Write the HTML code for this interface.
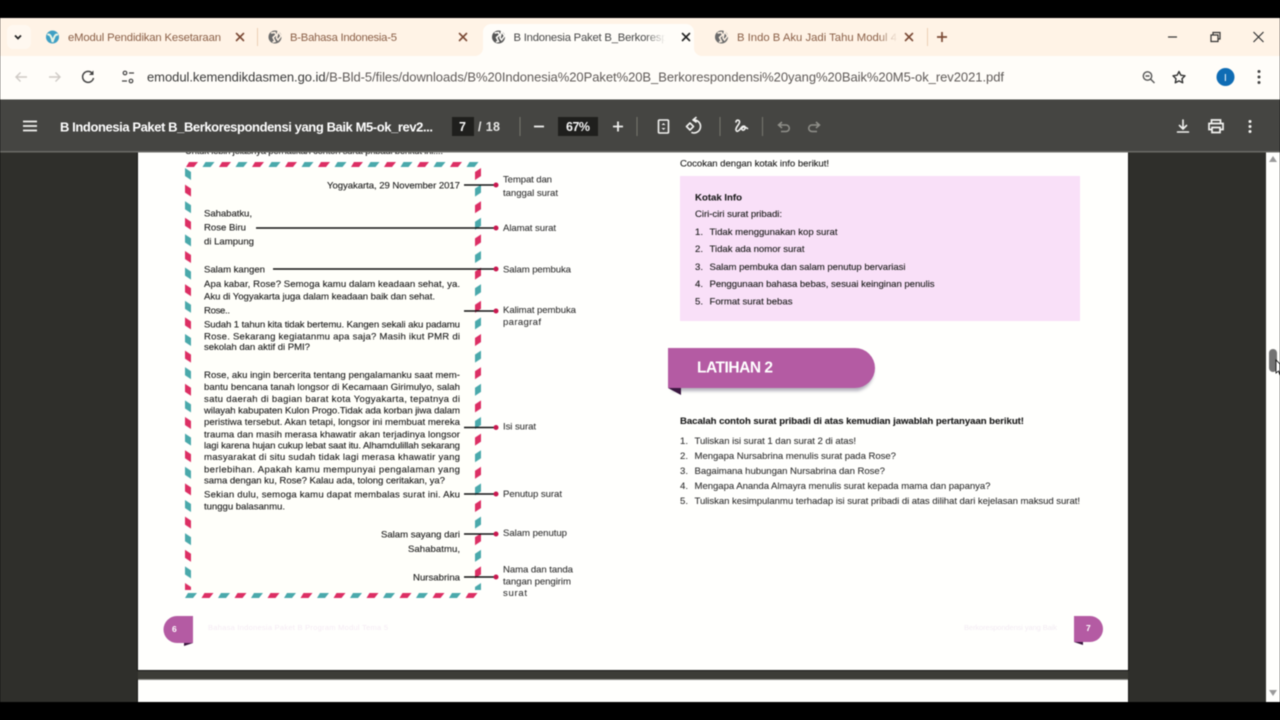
<!DOCTYPE html>
<html><head><meta charset="utf-8"><title>PDF</title>
<style>
html,body{margin:0;padding:0;background:#000;width:1280px;height:720px;overflow:hidden}
svg{display:block;filter:blur(.4px)}
text{font-family:"Liberation Sans",sans-serif;white-space:pre}
.d{font-size:9.6px;fill:#1c1c1c;stroke:#1c1c1c;stroke-width:.12px}
.l{font-size:9.6px;fill:#303030;stroke:#303030;stroke-width:.08px}
.t{font-size:11.3px;fill:#8a5f47}
.k{font-size:13px;font-weight:bold;fill:#fff}
.ic{fill:none;stroke:#f2f2f0;stroke-width:1.6;stroke-linecap:round;stroke-linejoin:round}
.x{fill:none;stroke:#7b4a35;stroke-width:1.6;stroke-linecap:round}
</style></head><body>
<svg width="1280" height="720" viewBox="0 0 1280 720" xmlns="http://www.w3.org/2000/svg">
<defs>
<pattern id="top" x="186" y="162" width="33" height="6" patternUnits="userSpaceOnUse">
<polygon points="0,5 3,0 12,0 8,5" fill="#dc2f64"/><polygon points="16.5,5 19.5,0 28.5,0 24.5,5" fill="#4aa9ab"/></pattern>
<pattern id="bot" x="185" y="593" width="33" height="6" patternUnits="userSpaceOnUse">
<polygon points="0,5 3,0 12,0 8,5" fill="#4aa9ab"/><polygon points="16.5,5 19.5,0 28.5,0 24.5,5" fill="#dc2f64"/></pattern>
<pattern id="lef" x="185" y="168" width="7" height="33.2" patternUnits="userSpaceOnUse">
<polygon points="0,0 6,4 6,12 0,8" fill="#4aa9ab"/><polygon points="0,16.6 6,20.6 6,28.6 0,24.6" fill="#dc2f64"/></pattern>
<pattern id="rig" x="475" y="168" width="7" height="33.2" patternUnits="userSpaceOnUse">
<polygon points="0,4 6,0 6,8 0,12" fill="#dc2f64"/><polygon points="0,20.6 6,16.6 6,24.6 0,28.6" fill="#4aa9ab"/></pattern>
<linearGradient id="fade" x1="0" x2="1"><stop offset="0" stop-color="#fffdf9" stop-opacity="0"/><stop offset=".85" stop-color="#fffdf9"/></linearGradient>
<linearGradient id="fade2" x1="0" x2="1"><stop offset="0" stop-color="#fff3e6" stop-opacity="0"/><stop offset="1" stop-color="#fff3e6"/></linearGradient>
<filter id="sh" x="-5%" y="-20%" width="110%" height="140%"><feGaussianBlur stdDeviation="1.5"/></filter>
</defs>

<rect width="1280" height="720" fill="#000"/>
<!-- viewer area -->
<rect x="0" y="152" width="1266" height="550" fill="#2f2f2b"/>
<rect x="1266" y="152" width="14" height="550" fill="#fffffd"/>
<!-- pages -->
<rect x="137" y="150" width="992" height="521" fill="#191917"/>
<rect x="138" y="150" width="990" height="520" fill="#fffffd"/>
<rect x="138" y="671" width="990" height="8" fill="#3c3c37"/>
<rect x="137" y="679" width="992" height="23" fill="#191917"/>
<rect x="138" y="679" width="990" height="1" fill="#8b8b85"/>
<rect x="138" y="680" width="990" height="22" fill="#fffffd"/>

<!-- letter paper -->
<rect x="190" y="168" width="286" height="425" fill="#fffffa"/>
<rect x="186" y="162" width="294" height="6" fill="url(#top)"/>
<rect x="185" y="593" width="294" height="6" fill="url(#bot)"/>
<rect x="185" y="168" width="7" height="422" fill="url(#lef)"/>
<rect x="475" y="168" width="7" height="422" fill="url(#rig)"/>

<text class="d" x="185" y="154" textLength="258" fill="#333">Untuk lebih jelasnya perhatikan contoh surat pribadi berikut ini....</text>
<text class="d" x="327" y="188.5" textLength="133">Yogyakarta, 29 November 2017</text>
<text class="d" x="204" y="216.5" textLength="48">Sahabatku,</text>
<text class="d" x="204" y="230.5" textLength="42">Rose Biru</text>
<text class="d" x="204" y="244.5" textLength="50">di Lampung</text>
<text class="d" x="204" y="272.5" textLength="61">Salam kangen</text>
<text class="d" x="204" y="287" textLength="256">Apa kabar, Rose? Semoga kamu dalam keadaan sehat, ya.</text>
<text class="d" x="204" y="299.5" textLength="231">Aku di Yogyakarta juga dalam keadaan baik dan sehat.</text>
<text class="d" x="204" y="313.5" textLength="26">Rose..</text>
<text class="d" x="204" y="327.5" textLength="256">Sudah 1 tahun kita tidak bertemu. Kangen sekali aku padamu</text>
<text class="d" x="204" y="339.5" textLength="256">Rose. Sekarang kegiatanmu apa saja? Masih ikut PMR di</text>
<text class="d" x="204" y="350" textLength="106">sekolah dan aktif di PMI?</text>

<text class="d" x="204" y="378" textLength="256">Rose, aku ingin bercerita tentang pengalamanku saat mem-</text>
<text class="d" x="204" y="390" textLength="256">bantu bencana tanah longsor di Kecamaan Girimulyo, salah</text>
<text class="d" x="204" y="402" textLength="256">satu daerah di bagian barat kota Yogyakarta, tepatnya di</text>
<text class="d" x="204" y="413.5" textLength="256">wilayah kabupaten Kulon Progo.Tidak ada korban jiwa dalam</text>
<text class="d" x="204" y="425" textLength="256">peristiwa tersebut. Akan tetapi, longsor ini membuat mereka</text>
<text class="d" x="204" y="437.5" textLength="256">trauma dan masih merasa khawatir akan terjadinya longsor</text>
<text class="d" x="204" y="448.5" textLength="256">lagi karena hujan cukup lebat saat itu. Alhamdulillah sekarang</text>
<text class="d" x="204" y="460" textLength="256">masyarakat di situ sudah tidak lagi merasa khawatir yang</text>
<text class="d" x="204" y="472.5" textLength="256">berlebihan. Apakah kamu mempunyai pengalaman yang</text>
<text class="d" x="204" y="483.5" textLength="241">sama dengan ku, Rose? Kalau ada, tolong ceritakan, ya?</text>
<text class="d" x="204" y="497.5" textLength="256">Sekian dulu, semoga kamu dapat membalas surat ini. Aku</text>
<text class="d" x="204" y="509.5" textLength="81">tunggu balasanmu.</text>
<text class="d" x="381" y="537.5" textLength="79">Salam sayang dari</text>
<text class="d" x="408" y="552" textLength="52">Sahabatmu,</text>
<text class="d" x="413" y="580.5" textLength="47">Nursabrina</text>

<!-- connectors -->
<g stroke="#111" stroke-width="1.4">
<path d="M464 185H496M256 228H496M273 269H496M464 311H496M464 427.5H496M464 494H496M464 534H496M464 577H496"/>
</g>
<g fill="#c9184f">
<circle cx="496" cy="185" r="2.5"/><circle cx="496" cy="228" r="2.5"/><circle cx="496" cy="269" r="2.5"/><circle cx="496" cy="311" r="2.5"/><circle cx="496" cy="427.5" r="2.5"/><circle cx="496" cy="494" r="2.5"/><circle cx="496" cy="534" r="2.5"/><circle cx="496" cy="577" r="2.5"/>
</g>
<text class="l" x="503" y="182.5" textLength="49">Tempat dan</text>
<text class="l" x="503" y="196" textLength="55">tanggal surat</text>
<text class="l" x="503" y="231" textLength="53">Alamat surat</text>
<text class="l" x="503" y="272.5" textLength="68">Salam pembuka</text>
<text class="l" x="503" y="313" textLength="73">Kalimat pembuka</text>
<text class="l" x="503" y="325" textLength="38">paragraf</text>
<text class="l" x="503" y="429.5" textLength="33">Isi surat</text>
<text class="l" x="503" y="497" textLength="59">Penutup surat</text>
<text class="l" x="503" y="536" textLength="64">Salam penutup</text>
<text class="l" x="503" y="572.5" textLength="70">Nama dan tanda</text>
<text class="l" x="503" y="584.5" textLength="68">tangan pengirim</text>
<text class="l" x="503" y="596" textLength="24">surat</text>

<!-- right column -->
<text class="d" x="680" y="166.5" textLength="149">Cocokan dengan kotak info berikut!</text>
<rect x="680" y="176" width="400" height="145" fill="#f9e0f8"/>
<text class="d" x="695" y="200.5" textLength="47" font-weight="bold" fill="#111">Kotak Info</text>
<text class="d" x="695" y="217" textLength="87">Ciri-ciri surat pribadi:</text>
<text class="d" x="695" y="235">1.</text><text class="d" x="709.5" y="235" textLength="128">Tidak menggunakan kop surat</text>
<text class="d" x="695" y="252">2.</text><text class="d" x="709.5" y="252" textLength="95">Tidak ada nomor surat</text>
<text class="d" x="695" y="270">3.</text><text class="d" x="709.5" y="270" textLength="196">Salam pembuka dan salam penutup bervariasi</text>
<text class="d" x="695" y="287">4.</text><text class="d" x="709.5" y="287" textLength="225">Penggunaan bahasa bebas, sesuai keinginan penulis</text>
<text class="d" x="695" y="304.5">5.</text><text class="d" x="709.5" y="304.5" textLength="83">Format surat bebas</text>

<!-- Latihan banner -->
<path d="M672 352H858a20 20 0 0 1 0 39H672Z" fill="#7f7c90" opacity=".6" filter="url(#sh)"/>
<path d="M668 348H855a20 20 0 0 1 0 40H668Z" fill="#b45ba3"/>
<path d="M668 388H681L681 395Z" fill="#3a1740"/>
<text x="697" y="372.5" font-size="15.5" font-weight="bold" fill="#fff" textLength="76">LATIHAN 2</text>

<text class="d" x="680" y="424" textLength="344" font-weight="bold" fill="#111">Bacalah contoh surat pribadi di atas kemudian jawablah pertanyaan berikut!</text>
<text class="l" x="680" y="444">1.</text><text class="l" x="694.5" y="444" textLength="161.5">Tuliskan isi surat 1 dan surat 2 di atas!</text>
<text class="l" x="680" y="459">2.</text><text class="l" x="694.5" y="459" textLength="201.5">Mengapa Nursabrina menulis surat pada Rose?</text>
<text class="l" x="680" y="474">3.</text><text class="l" x="694.5" y="474" textLength="190.5">Bagaimana hubungan Nursabrina dan Rose?</text>
<text class="l" x="680" y="489">4.</text><text class="l" x="694.5" y="489" textLength="296">Mengapa Ananda Almayra menulis surat kepada mama dan papanya?</text>
<text class="l" x="680" y="504">5.</text><text class="l" x="694.5" y="504" textLength="385.5">Tuliskan kesimpulanmu terhadap isi surat pribadi di atas dilihat dari kejelasan maksud surat!</text>

<!-- footer badges -->
<path d="M193 616H177a13 13 0 0 0 0 27H193Z" fill="#b45ba3"/>
<path d="M184 643H193L184 646Z" fill="#3a1740"/>
<text x="172" y="632" font-size="8.5" font-weight="bold" fill="#fff">6</text>
<text x="208" y="630" font-size="7.5" fill="#f5ebf4" textLength="180">Bahasa Indonesia Paket B Program Modul Tema 5</text>
<text x="964" y="630" font-size="7.5" fill="#f3ebf3" textLength="93">Berkorespondensi yang Baik</text>
<path d="M1074 616H1090a13 13 0 0 1 0 26H1074Z" fill="#b45ba3"/>
<path d="M1074 642H1083L1083 645Z" fill="#3a1740"/>
<text x="1086" y="631" font-size="8.5" font-weight="bold" fill="#fff">7</text>

<!-- scrollbar -->
<path d="M1269 162L1273 156L1277 162Z" fill="#9a9a9a"/>
<path d="M1269 690L1273 696L1277 690Z" fill="#9a9a9a"/>
<rect x="1269" y="349" width="8" height="23" rx="4" fill="#737373"/>
<path d="M1276 360V373L1278.5 371L1280 375V364Z" fill="#fff" stroke="#000" stroke-width=".8"/>

<!-- browser chrome -->
<rect x="0" y="18" width="1280" height="38" fill="#fff3e6"/>
<rect x="0" y="56" width="1280" height="44" fill="#fffdf9"/>
<path d="M475 56a8 8 0 0 0 8-8V32a8 8 0 0 1 8-8H686a8 8 0 0 1 8 8V48a8 8 0 0 0 8 8Z" fill="#fffdf9"/>
<rect x="7" y="25" width="24" height="24" rx="6" fill="#fff8f0"/>
<path d="M15 35.5L18 38.5L21 35.5" fill="none" stroke="#222" stroke-width="1.7"/>

<circle cx="52.5" cy="37" r="6.5" fill="#3e9fc4"/><path d="M47.5 35C50 33 52 38 52.5 42C54 38 55 33 58 35" fill="none" stroke="#e9f4e6" stroke-width="2"/>
<text class="t" x="68" y="41" textLength="153">eModul Pendidikan Kesetaraan</text>
<path class="x" d="M236.5 33.5L243.5 40.5M243.5 33.5L236.5 40.5"/>
<rect x="257" y="28" width="1" height="18" fill="#eccfb4"/>

<circle cx="275" cy="37" r="6.5" fill="#6a6a6a"/><path d="M271 33L275 32.5L276 35L273 37.5L275 41.5L272.5 42M278 31.5L281 36L278 40L276.5 38Z" fill="none" stroke="#fff3e6" stroke-width="1.5"/>
<text class="t" x="290" y="41" textLength="107">B-Bahasa Indonesia-5</text>
<path class="x" d="M459.5 33.5L466.5 40.5M466.5 33.5L459.5 40.5"/>

<circle cx="498.5" cy="37" r="6.5" fill="#555"/><path d="M494.5 33L498.5 32.5L499.5 35L496.5 37.5L498.5 41.5L496 42M501.5 31.5L504.5 36L501.5 40L500 38Z" fill="none" stroke="#fffdf9" stroke-width="1.5"/>
<text class="t" x="513.5" y="41" textLength="154" style="fill:#484848">B Indonesia Paket B_Berkoresp</text>
<rect x="645" y="28" width="24" height="18" fill="url(#fade)"/>
<path fill="none" stroke="#222" stroke-width="1.6" stroke-linecap="round" d="M682.5 33.5L689.5 40.5M689.5 33.5L682.5 40.5"/>

<circle cx="721.5" cy="37" r="6.5" fill="#6a6a6a"/><path d="M717.5 33L721.5 32.5L722.5 35L719.5 37.5L721.5 41.5L719 42M724.5 31.5L727.5 36L724.5 40L723 38Z" fill="none" stroke="#fff3e6" stroke-width="1.5"/>
<text class="t" x="737" y="41" textLength="160">B Indo B Aku Jadi Tahu Modul 4</text>
<rect x="878" y="28" width="20" height="18" fill="url(#fade2)"/>
<path class="x" d="M905.5 33.5L912.5 40.5M912.5 33.5L905.5 40.5"/>
<rect x="927" y="28" width="1" height="18" fill="#eccfb4"/>
<path d="M942 32V42M937 37H947" stroke="#7b4a35" stroke-width="1.7" fill="none"/>
<path d="M1168 37H1177" stroke="#333" stroke-width="1.2"/>
<path d="M1211 35H1218V41.5H1211ZM1213 35V32.5H1220V39H1218" fill="none" stroke="#333" stroke-width="1.2"/>
<path d="M1253.5 32L1263.5 42M1263.5 32L1253.5 42" stroke="#333" stroke-width="1.2"/>

<!-- address bar -->
<path d="M27 77H16M20.5 72.5L16 77L20.5 81.5" fill="none" stroke="#cfcac5" stroke-width="1.4"/>
<path d="M49 77H60M55.5 72.5L60 77L55.5 81.5" fill="none" stroke="#cfcac5" stroke-width="1.4"/>
<path d="M92.5 73.5A5.5 5.5 0 1 0 93.5 78" fill="none" stroke="#444" stroke-width="1.5"/><path d="M93.5 70.5V75H89Z" fill="#444"/>
<circle cx="125" cy="73" r="1.8" fill="none" stroke="#444" stroke-width="1.2"/><path d="M129 73H134M122 81H127" stroke="#444" stroke-width="1.3"/><circle cx="131" cy="81" r="1.8" fill="none" stroke="#444" stroke-width="1.2"/>
<text x="147" y="81.5" font-size="13" fill="#5f5a58" textLength="857"><tspan fill="#3a3a3a">emodul.kemendikdasmen.go.id</tspan>/B-Bld-5/files/downloads/B%20Indonesia%20Paket%20B_Berkorespondensi%20yang%20Baik%20M5-ok_rev2021.pdf</text>
<circle cx="1147.5" cy="76" r="4.2" fill="none" stroke="#555" stroke-width="1.4"/><path d="M1150.5 79L1154.5 83M1145.5 76H1149.5" stroke="#555" stroke-width="1.4"/>
<path d="M1179 71.5L1180.8 75.2L1185 75.8L1182 78.7L1182.7 82.8L1179 80.9L1175.3 82.8L1176 78.7L1173 75.8L1177.2 75.2Z" fill="none" stroke="#333" stroke-width="1.4" stroke-linejoin="round"/>
<circle cx="1225.5" cy="77" r="9" fill="#0f6cb4"/><text x="1224" y="81" font-size="10" fill="#fff">I</text>
<g fill="#444"><circle cx="1259" cy="71.5" r="1.5"/><circle cx="1259" cy="77" r="1.5"/><circle cx="1259" cy="82.5" r="1.5"/></g>
<rect x="0" y="99.5" width="1280" height="1" fill="#3a3a38"/>

<!-- PDF toolbar -->
<rect x="0" y="100" width="1280" height="52" fill="#454542"/>
<rect x="0" y="151" width="1280" height="1.5" fill="#6b6b66"/>
<path d="M23 121.5H37M23 126H37M23 130.5H37" stroke="#f2f2f0" stroke-width="1.7"/>
<text class="k" x="60" y="131.5" textLength="373">B Indonesia Paket B_Berkorespondensi yang Baik M5-ok_rev2...</text>
<rect x="452" y="117" width="22" height="19" fill="#1f1f1d"/>
<text x="459" y="131" font-size="12.5" font-weight="bold" fill="#f5f5f5">7</text>
<text x="478" y="131" font-size="12.5" font-weight="bold" fill="#e6e6e4" textLength="22">/ 18</text>
<rect x="519.5" y="117" width="1" height="19" fill="#77776f"/>
<path d="M534 126.5H544" stroke="#f0f0ee" stroke-width="1.8"/>
<rect x="558" y="117" width="40" height="19" fill="#1f1f1d"/>
<text x="566" y="131" font-size="12.5" font-weight="bold" fill="#f5f5f5" textLength="24">67%</text>
<path d="M613 126.5H623M618 121.5V131.5" stroke="#f0f0ee" stroke-width="1.8"/>
<rect x="636.5" y="117" width="1" height="19" fill="#77776f"/>
<rect x="658.5" y="120" width="10" height="13" rx="1" class="ic"/><path d="M661.5 125L663.5 123L665.5 125H661.5ZM661.5 128L663.5 130L665.5 128Z" fill="#f2f2f0"/>
<path class="ic" d="M693 120A6.5 6.5 0 1 1 692 132.6M693 120L696 117.5M693 120L696 122"/>
<path class="ic" d="M690 123L693.5 126.5L690 130L686.5 126.5Z"/>
<rect x="719.5" y="117" width="1" height="19" fill="#77776f"/>
<path class="ic" d="M736 122C736 119.5 740 119.5 739.5 122.5C739 125 735.5 127 736 130C736.5 132.5 739 131 741 128C743 125 746 126 745 128.5C744 131 741 130.5 742 128C743 126 746 127.5 747.5 128.5"/>
<rect x="762" y="117" width="1" height="19" fill="#77776f"/>
<path d="M782 122L778.5 125L782 128M779 125H786A3 3 0 0 1 786 131.5H781" fill="none" stroke="#8f8f89" stroke-width="1.5"/>
<path d="M816 122L819.5 125L816 128M819 125H812A3 3 0 0 0 812 131.5H817" fill="none" stroke="#8f8f89" stroke-width="1.5"/>
<path class="ic" d="M1183 120V128.5M1179.5 125.5L1183 129L1186.5 125.5M1177.5 132H1188.5"/>
<path d="M1211.5 123V120H1220.5V123M1211.5 129.5H1209V123.5H1223V129.5H1220.5M1212 127.5H1220V132.5H1212Z" fill="none" stroke="#f2f2f0" stroke-width="1.7"/>
<g fill="#f2f2f0"><circle cx="1250" cy="121.5" r="1.5"/><circle cx="1250" cy="126.5" r="1.5"/><circle cx="1250" cy="131.5" r="1.5"/></g>
</svg>
</body></html>
